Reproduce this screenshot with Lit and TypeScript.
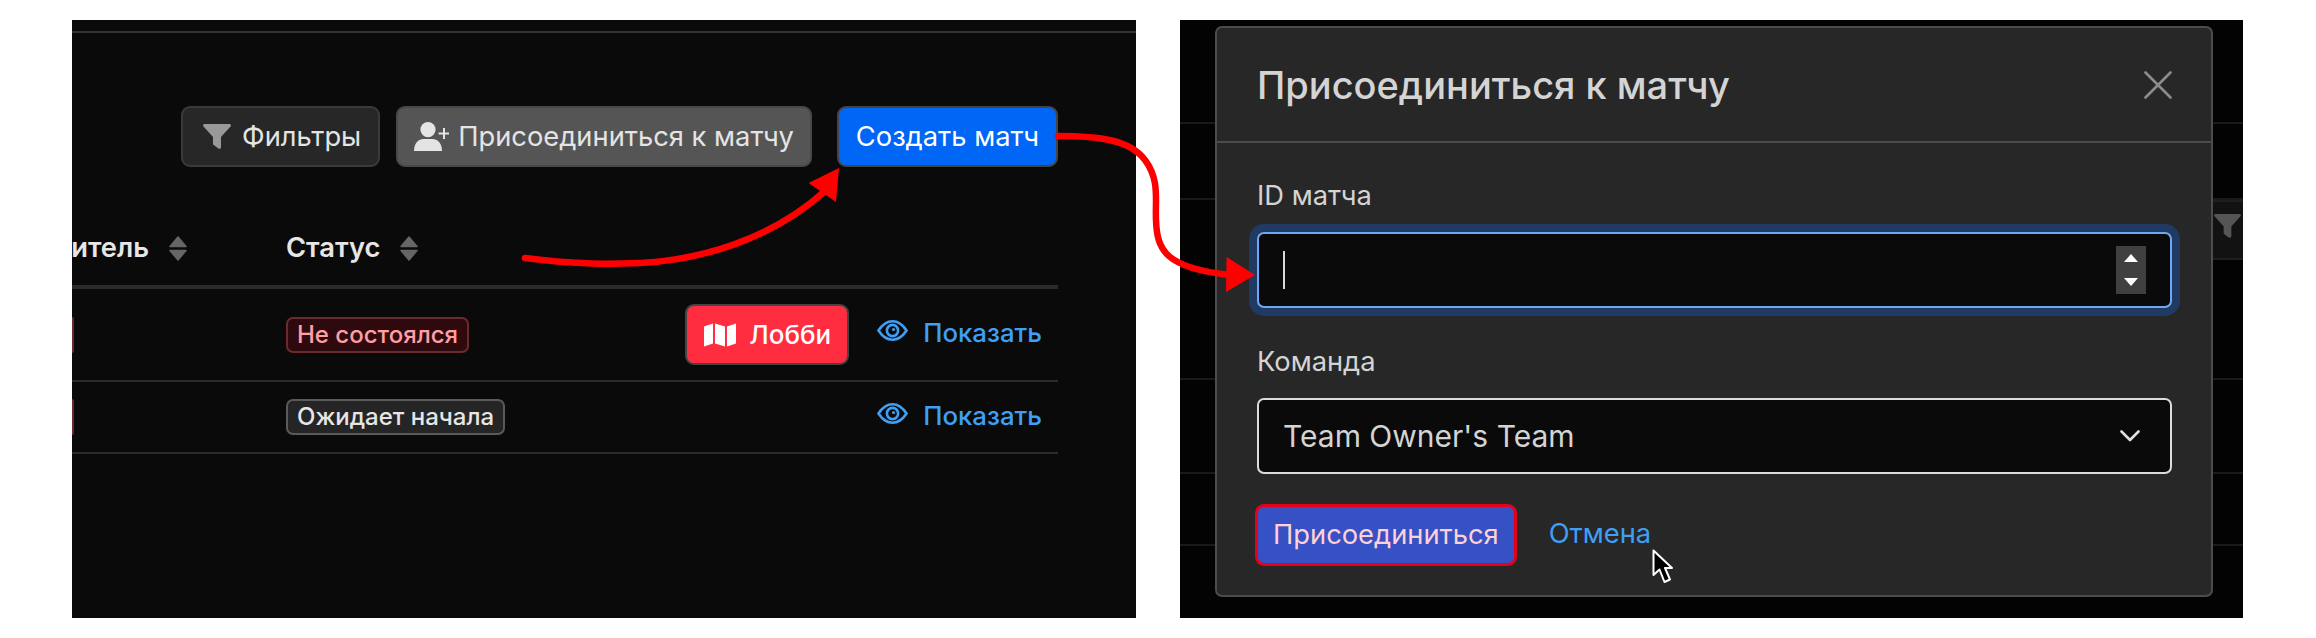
import { LitElement, html, css, svg } from "lit";
import { customElement } from "lit/decorators.js";

const sortIcon = html`<svg class="sort" width="18" height="25" viewBox="0 0 18 25"><path d="M9 1 L17 10.5 H1 Z M1 14.5 H17 L9 24 Z" fill="#666" stroke="#666" stroke-width="1.5" stroke-linejoin="round"/></svg>`;

const eye = html`<svg class="eye" width="31" height="21" viewBox="0 0 31 21" fill="none" stroke="#3f9ff5" stroke-width="2.6"><path d="M1.5 10.5C6 3.6 10.5 1.3 15.5 1.3S25 3.6 29.5 10.5C25 17.4 20.5 19.7 15.5 19.7S6 17.4 1.5 10.5Z"/><circle cx="15.5" cy="10.5" r="5.6"/><circle cx="16.5" cy="9.5" r="1.6" fill="#3f9ff5" stroke="none"/></svg>`;

@customElement("app-root")
export class AppRoot extends LitElement {
  static styles = css`
    :host { display: block; width: 2316px; height: 638px; background: #fff; position: relative; overflow: hidden; font-family: Inter, "Liberation Sans", sans-serif; font-size: 27.3px; line-height: 36px; }
    .page { display: flex; gap: 44px; padding: 20px 0 0 72px; }
    .left { width: 1064px; height: 598px; background: #0a0a0a; padding-right: 78px; box-sizing: border-box; }
    .topline { margin-top: 11px; height: 2px; background: #333; margin-right: -78px; }
    .toolbar { display: flex; justify-content: flex-end; gap: 16px; margin-top: 73px; height: 61px; }
    .btn { display: flex; align-items: center; box-sizing: border-box; height: 61px; border: 2px solid #3a3a3a; border-radius: 9px; color: #e4e4e4; white-space: nowrap; }
    .filters { background: #272727; padding: 0 17px 0 20px; gap: 11px; }
    .join { background: #555; border-color: #484848; padding: 0 16px 0 16px; gap: 9px; }
    .create { background: #0066f5; color: #fff; border-color: #444; padding: 0 17px; margin-left: 9px; }
    .thead { display: flex; align-items: flex-end; height: 122px; padding-bottom: 19px; box-sizing: border-box; border-bottom: 4px solid #2b2b2b; font-weight: 600; color: #e6e6e6; }
    .th1 { width: 115px; margin-right: 99px; display: flex; justify-content: flex-end; align-items: center; overflow: hidden; gap: 20px; flex: none; }
    .th1 span { flex: none; }
    .th2 { display: flex; align-items: center; gap: 20px; }
    .sort { flex: none; }
    .row { display: flex; align-items: center; box-sizing: border-box; border-bottom: 2px solid #2b2b2b; padding-right: 16px; }
    .r1 { height: 93px; }
    .r2 { height: 72px; }
    .r2 .show { padding-bottom: 2px; }
    .stub { width: 2px; height: 36px; background: #6b2a30; border-radius: 0 6px 6px 0; margin-right: 212px; flex: none; }
    .badge { box-sizing: border-box; height: 36px; display: flex; align-items: center; padding: 0 9px; border-radius: 7px; border: 2px solid; font-size: 24px; font-weight: 500; white-space: nowrap; }
    .danger { background: #2e0a0e; border-color: #6b2a30; color: #ff9fa5; }
    .wait { background: #252525; border-color: #5a5a5a; color: #e6e6e6; }
    .actions { margin-left: auto; display: flex; align-items: center; gap: 28px; }
    .lobby { background: #ff2d3f; color: #fff; font-weight: 500; font-size: 26px; border-color: #444; padding: 0 16px 0 17px; gap: 13px; }
    .show { display: flex; align-items: center; gap: 15px; color: #3f9ff5; font-size: 25.8px; font-weight: 500; padding-bottom: 4px; }
    .eye { margin-top: -5px; }

    .right { width: 1063px; height: 598px; background: #030303; position: relative; overflow: hidden; }
    .bline { border-bottom: 2px solid #1a1a1a; box-sizing: border-box; }
    .b1 { height: 104px; }
    .b2 { height: 76px; }
    .ghost { height: 60px; display: flex; justify-content: flex-end; }
    .ghostbtn { width: 30px; background: #121212; border-top: 2px solid #1e1e1e; border-bottom: 2px solid #1e1e1e; box-sizing: border-box; display: flex; align-items: center; justify-content: flex-end; padding: 0 2px 8px 0; }
    .b3 { height: 120px; }
    .b4 { height: 94px; }
    .b5 { height: 72px; }
    .modal { position: absolute; left: 35px; top: 6px; width: 998px; height: 571px; box-sizing: border-box; background: #272727; border: 2px solid #4c4c4c; border-radius: 7px; color: #d4d4d4; }
    .mhead { height: 115px; box-sizing: border-box; border-bottom: 2px solid #4c4c4c; display: flex; align-items: center; justify-content: space-between; padding: 0 39px 0 40px; }
    .title { font-size: 38px; font-weight: 500; line-height: 46px; }
    .mbody { padding: 35px 39px 0 40px; display: flex; flex-direction: column; }
    .field { box-sizing: border-box; background: #0a0a0a; border-radius: 7px; border: 2px solid; display: flex; align-items: center; justify-content: space-between; margin-top: 18px; }
    .num { height: 76px; border-color: #6ea8ef; box-shadow: 0 0 0 8px #1f3a63; padding: 0 24px 0 24px; margin-bottom: 36px; }
    .caret { width: 2px; height: 38px; background: #d8d8d8; }
    .spin { width: 30px; height: 48px; background: #404040; display: flex; align-items: center; justify-content: center; }
    .sel { height: 76px; border-color: #dcdcdc; padding: 0 30px 0 24px; font-size: 30px; margin-bottom: 30px; }
    .foot { display: flex; align-items: center; gap: 32px; }
    .primary { height: 62px; background: #3651c4; color: #ffd0d6; border: 3px solid #e6001a; padding: 0 15px; margin-left: -2px; font-weight: 400; }
    .cancel { color: #3f9ff5; font-weight: 400; padding-bottom: 2px; }

    .overlay { position: absolute; left: 0; top: 0; pointer-events: none; }
  `;

  render() {
    return html`
      <div class="page">
        <section class="left">
          <div class="topline"></div>
          <div class="toolbar">
            <div class="btn filters">
              <svg width="28" height="25" viewBox="0 0 28 25"><path d="M1.5 0H26.5A1.4 1.4 0 0 1 27.5 2.4L18 13V23.2C18 24.6 16.6 25.2 15.4 24.4L11.4 21.6C10.6 21 10 20.4 10 19.4V13L.5 2.4A1.4 1.4 0 0 1 1.5 0Z" fill="#999"/></svg>
              <span>Фильтры</span>
            </div>
            <div class="btn join">
              <svg width="35" height="29" viewBox="0 0 35 29" fill="#e4e4e4"><circle cx="14" cy="7.6" r="7.6"/><path d="M0 29C0 22 3.5 17 9.5 17H18.5C24.5 17 28 22 28 29Z"/><path d="M30 6V17M24.6 11.5H35" stroke="#e4e4e4" stroke-width="2" fill="none"/></svg>
              <span>Присоединиться к матчу</span>
            </div>
            <div class="btn create">Создать матч</div>
          </div>
          <div class="thead">
            <div class="th1"><span>Победитель</span>${sortIcon}</div>
            <div class="th2"><span>Статус</span>${sortIcon}</div>
          </div>
          <div class="row r1">
            <div class="stub"></div>
            <div class="badge danger">Не состоялся</div>
            <div class="actions">
              <div class="btn lobby">
                <svg width="32" height="24" viewBox="0 0 32 24" fill="#fff"><path d="M0 3.5L9 .5V20.5L0 23.5ZM11 .5L21 3.5V23.5L11 20.5ZM23 3.5L32 .5V20.5L23 23.5Z"/></svg>
                <span>Лобби</span>
              </div>
              <div class="show">${eye}<span>Показать</span></div>
            </div>
          </div>
          <div class="row r2">
            <div class="stub"></div>
            <div class="badge wait">Ожидает начала</div>
            <div class="actions"><div class="show">${eye}<span>Показать</span></div></div>
          </div>
        </section>

        <section class="right">
          <div class="bline b1"></div>
          <div class="bline b2"></div>
          <div class="ghost"><div class="ghostbtn">
            <svg width="27" height="24" viewBox="0 0 28 25"><path d="M1.5 0H26.5A1.4 1.4 0 0 1 27.5 2.4L18 13V23.2C18 24.6 16.6 25.2 15.4 24.4L11.4 21.6C10.6 21 10 20.4 10 19.4V13L.5 2.4A1.4 1.4 0 0 1 1.5 0Z" fill="#555"/></svg>
          </div></div>
          <div class="bline b3"></div>
          <div class="bline b4"></div>
          <div class="bline b5"></div>
          <div class="modal">
            <div class="mhead">
              <div class="title">Присоединиться к матчу</div>
              <svg width="28" height="28" viewBox="0 0 28 28" stroke="#8c8c8c" stroke-width="2.6" stroke-linecap="round"><path d="M1.5 1.5L26.5 26.5M26.5 1.5L1.5 26.5"/></svg>
            </div>
            <div class="mbody">
              <label>ID матча</label>
              <div class="field num">
                <div class="caret"></div>
                <div class="spin"><svg width="14" height="32" viewBox="0 0 14 32" fill="#fff"><path d="M7 0L14 8H0ZM0 24H14L7 32Z"/></svg></div>
              </div>
              <label>Команда</label>
              <div class="field sel">
                <span>Team Owner's Team</span>
                <svg width="20" height="12" viewBox="0 0 20 12" fill="none" stroke="#e0e0e0" stroke-width="2.6" stroke-linecap="round" stroke-linejoin="round"><path d="M1.5 1.5L10 10L18.5 1.5"/></svg>
              </div>
              <div class="foot">
                <div class="btn primary">Присоединиться</div>
                <div class="cancel">Отмена</div>
              </div>
            </div>
          </div>
        </section>
      </div>
      <svg class="overlay" width="2316" height="638" viewBox="0 0 2316 638" fill="none">
        ${svg`
          <path d="M525 258C580 265 610 264 640 263C700 260 770 240 824 192" stroke="#f00" stroke-width="6.5" stroke-linecap="round"/>
          <path d="M839 168L808.6 183L836 202Z" fill="#f00"/>
          <path d="M1058 136C1100 136 1130 140 1145 160C1160 180 1155 200 1156 220C1157 250 1165 268 1230 275" stroke="#f00" stroke-width="6.5" stroke-linecap="round"/>
          <path d="M1255 275L1226.6 257L1226 292Z" fill="#f00"/>
          <path d="M1653.5 550.5V575L1659.5 569.5L1664.5 582L1670 579.5L1665 568H1672Z" fill="#000" stroke="#fff" stroke-width="2" stroke-linejoin="round"/>
        `}
      </svg>
    `;
  }
}
